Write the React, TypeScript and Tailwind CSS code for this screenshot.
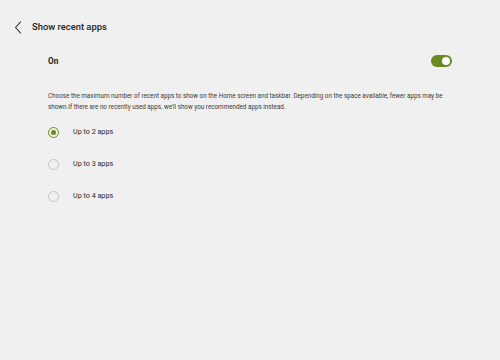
import React, { useState } from 'react';

const options = ['Up to 2 apps', 'Up to 3 apps', 'Up to 4 apps'];

export default function App() {
  const [enabled, setEnabled] = useState(true);
  const [selected, setSelected] = useState(0);

  return (
    <div className="w-[500px] h-[360px] bg-[#eff0ef] text-[#1c1c1c] font-['Roboto',sans-serif] overflow-hidden">
      <header className="flex items-center h-[54px] pl-[13px]">
        <button className="w-[10px] h-[14px] flex items-center justify-center">
          <svg width="8" height="13" viewBox="0 0 8 13" fill="none">
            <path d="M6.5 1L1.5 6.5L6.5 12" stroke="#222" strokeWidth="1.1" strokeLinecap="round" strokeLinejoin="round" />
          </svg>
        </button>
        <h1 className="ml-[9px] text-[9.4px] font-medium">Show recent apps</h1>
      </header>

      <div className="pl-[48px] pr-[48px]">
        <div className="flex items-center justify-between h-[14px]">
          <span className="text-[8.2px] font-bold">On</span>
          <button
            onClick={() => setEnabled(!enabled)}
            className={`w-[21px] h-[12px] rounded-full flex items-center px-[2px] ${enabled ? 'bg-[#6a8a22] justify-end' : 'bg-[#bdbdbd] justify-start'}`}
          >
            <span className="w-[8px] h-[8px] rounded-full bg-white" />
          </button>
        </div>

        <p className="mt-[23px] -mr-[10px] text-[6.3px] leading-[11px] text-[#3a3a3a]">
          Choose the maximum number of recent apps to show on the Home screen and taskbar. Depending on the space available, fewer apps may be shown.If there are no recently used apps, we'll show you recommended apps instead.
        </p>

        <div className="mt-[3px] flex flex-col">
          {options.map((opt, i) => (
            <button
              key={opt}
              onClick={() => setSelected(i)}
              className="flex items-center h-[32px] text-left"
            >
              <span
                className={`w-[11px] h-[11px] rounded-full flex items-center justify-center border ${selected === i ? 'border-[#6a8a22] border-[1.5px]' : 'border-[#c4c4c4]'}`}
              >
                {selected === i && <span className="w-[5px] h-[5px] rounded-full bg-[#6a8a22]" />}
              </span>
              <span className="ml-[14px] text-[7.2px] text-[#2a2a2a]">{opt}</span>
            </button>
          ))}
        </div>
      </div>
    </div>
  );
}
